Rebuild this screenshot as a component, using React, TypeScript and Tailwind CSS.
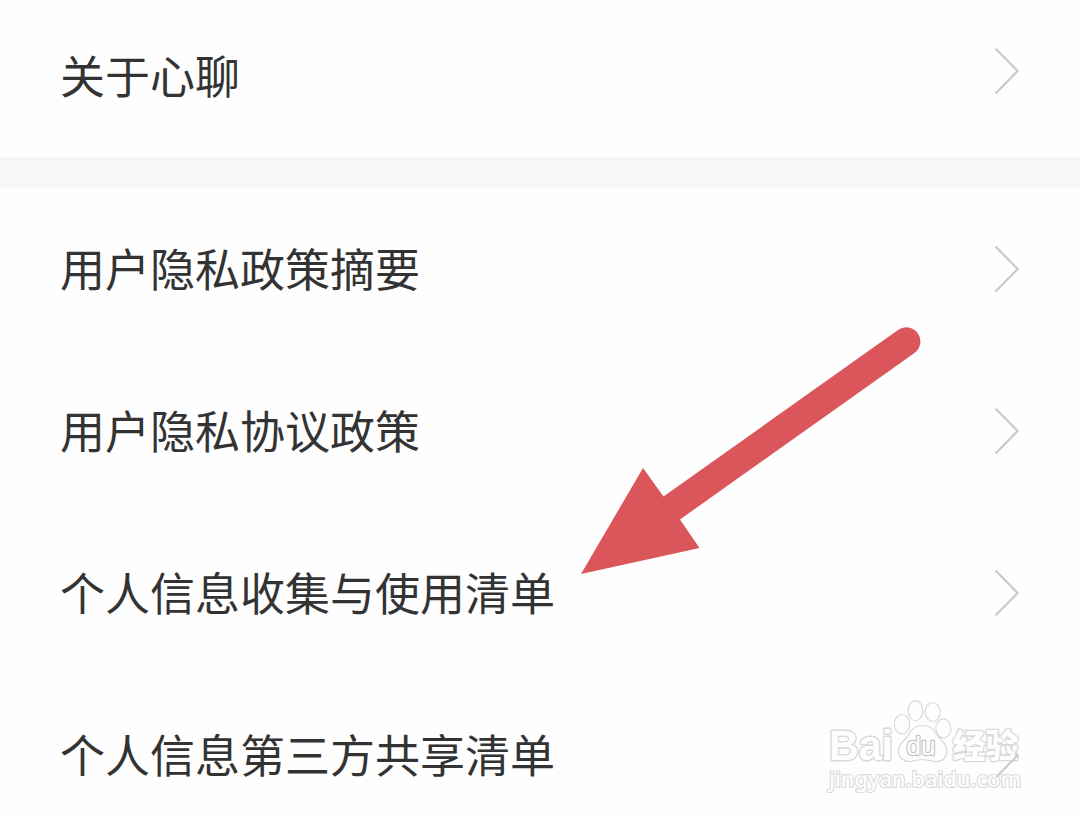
import React from "react";
import clsx from "clsx";

type MenuItem = {
  id: string;
  label: string;
};

const aboutItems: MenuItem[] = [{ id: "about", label: "关于心聊" }];

const privacyItems: MenuItem[] = [
  { id: "privacy-summary", label: "用户隐私政策摘要" },
  { id: "privacy-agreement", label: "用户隐私协议政策" },
  { id: "info-collection", label: "个人信息收集与使用清单" },
  { id: "info-sharing", label: "个人信息第三方共享清单" },
];

function Chevron({ className }: { className?: string }) {
  return (
    <svg
      width="28"
      height="50"
      viewBox="0 0 28 50"
      fill="none"
      stroke="#cacaca"
      strokeWidth="2.2"
      className={className}
    >
      <path d="M2.500 2.5L24.700 25L2.500 47.5" />
    </svg>
  );
}

function MenuRow({ item, first, last }: { item: MenuItem; first?: boolean; last?: boolean }) {
  return (
    <button className="flex h-[162px] w-full shrink-0 items-center justify-between pr-[59px] pl-[60px] text-left">
      <span className="pb-[2px] text-[45px] leading-[60px] whitespace-nowrap text-[#333333]">
        {item.label}
      </span>
      <Chevron className={clsx("shrink-0", first && "mb-[10px]", last && "opacity-40")} />
    </button>
  );
}

// Red pointer laid over the list
function PointerArrow() {
  return (
    <svg
      className="pointer-events-none absolute top-[310px] left-[560px]"
      width="380"
      height="280"
      viewBox="560 310 380 280"
    >
      <path
        d="M581 574L643 468L663.5 496.5L898 330A14 14 0 0 1 914.5 353L680 519.5L699.5 548Z"
        fill="#db565b"
      />
    </svg>
  );
}

function Watermark() {
  return (
    <svg
      className="pointer-events-none absolute top-[690px] left-[810px]"
      width="230"
      height="120"
      viewBox="0 0 230 120"
      fill="#fefefe"
      stroke="#d9d9d9"
      strokeWidth="1.2"
      strokeLinejoin="round"
    >
      <ellipse cx="92" cy="34.2" rx="7.7" ry="9.7" />
      <ellipse cx="105.5" cy="20.7" rx="7.3" ry="10" />
      <ellipse cx="122.7" cy="22" rx="7.6" ry="9.5" />
      <ellipse cx="133.4" cy="38.4" rx="7.6" ry="9.5" />
      <path d="M112.500 35.500C105 35.500 101.500 39.500 99 44C96 50 88.500 53 88.500 60.500C88.500 68 94 71.800 100 71.500C105 71.200 108 69.500 112.500 69.500C117 69.500 120 71.500 126 71.500C133 71.500 137 67 137 61C137 53.500 130 50 127 44.500C124 39 120 35.500 112.500 35.500Z" />
      <text
        x="19"
        y="69.500"
        fontSize="42"
        textLength="64"
        lengthAdjust="spacingAndGlyphs"
        strokeWidth="2.8"
        className="font-['Liberation_Sans',Arial,sans-serif] font-bold [paint-order:stroke]"
      >
        Bai
      </text>
      <text
        x="96.500"
        y="65"
        fontSize="25"
        textLength="29"
        lengthAdjust="spacingAndGlyphs"
        stroke="#c8c8c8"
        strokeWidth="2.4"
        className="font-['Liberation_Sans',Arial,sans-serif] [paint-order:stroke]"
      >
        du
      </text>
      <text
        x="142.500"
        y="67.500"
        fontSize="33"
        textLength="66"
        lengthAdjust="spacingAndGlyphs"
        strokeWidth="2.6"
        className="font-['Noto_Sans_CJK_SC',sans-serif] font-black [paint-order:stroke]"
      >
        经验
      </text>
      <text
        x="19"
        y="96.500"
        fontSize="22"
        textLength="192"
        lengthAdjust="spacingAndGlyphs"
        strokeWidth="2.2"
        className="font-['Noto_Sans',sans-serif] font-medium [paint-order:stroke]"
      >
        jingyan.baidu.com
      </text>
      {/* the last row's chevron still shows through the mark */}
      <path d="M186.500 42.500L208 65" fill="none" stroke="#cccccc" strokeOpacity="0.5" />
      <path d="M208 65L186.500 87" fill="none" stroke="#c4c4c4" strokeWidth="1.6" />
    </svg>
  );
}

export default function App() {
  return (
    <div className="relative flex h-[816px] w-[1080px] flex-col overflow-hidden bg-[#fefefe] font-['Noto_Sans_CJK_SC',sans-serif]">
      {/* About */}
      <section className="flex h-[157px] shrink-0 flex-col justify-end">
        {aboutItems.map((item) => (
          <MenuRow key={item.id} item={item} first />
        ))}
      </section>

      <div className="h-[31px] shrink-0 bg-[#f7f7f7]" />

      {/* Privacy */}
      <section className="flex flex-col">
        {privacyItems.map((item, i) => (
          <MenuRow key={item.id} item={item} last={i === privacyItems.length - 1} />
        ))}
      </section>

      <PointerArrow />
      <Watermark />
    </div>
  );
}
